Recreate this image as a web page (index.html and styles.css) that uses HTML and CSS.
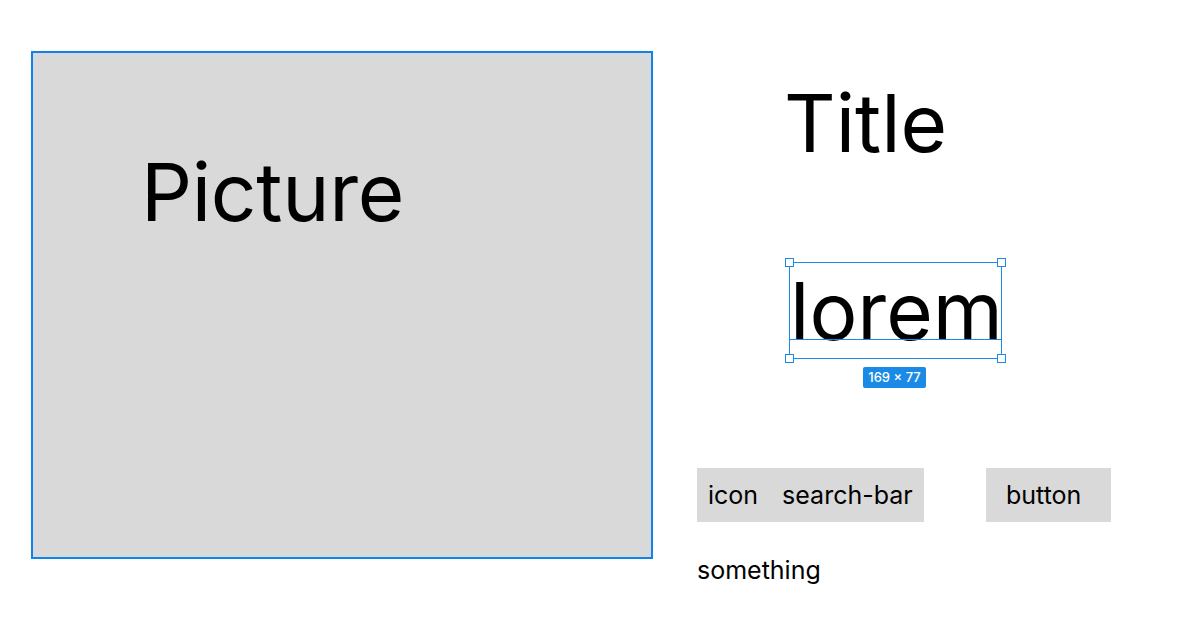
FILE: index.html
```html
<!DOCTYPE html>
<html lang="en">
<head>
<meta charset="utf-8">
<title>Wireframe</title>
<link rel="stylesheet" href="styles.css">
</head>
<body>
<div class="canvas">
  <div class="picture">
    <div class="picture-text">Picture</div>
  </div>
  <div class="side">
    <div class="title">Title</div>
    <div class="selection">
      <span class="lorem">lorem</span>
      <span class="baseline"></span>
      <span class="handle tl"></span>
      <span class="handle tr"></span>
      <span class="handle bl"></span>
      <span class="handle br"></span>
      <span class="size-label">169 × 77</span>
    </div>
    <div class="row">
      <div class="searchbar">
        <span>icon</span>
        <span>search-bar</span>
      </div>
      <div class="button">button</div>
    </div>
    <div class="something">something</div>
  </div>
</div>
</body>
</html>
```

FILE: styles.css
```css
html, body {
  margin: 0;
  padding: 0;
  background: #ffffff;
}

body {
  font-family: Inter, "Noto Sans", sans-serif;
  color: #000000;
}

.canvas {
  display: flex;
  align-items: flex-start;
  padding: 51px 0 0 31px;
  gap: 44px;
}

.picture {
  box-sizing: border-box;
  width: 622px;
  height: 508px;
  border: 2px solid #0d84eb;
  background: #d9d9d9;
  padding: 90px 0 0 108px;
  flex-shrink: 0;
}

.picture-text {
  font-size: 80px;
  line-height: 97px;
  letter-spacing: -0.3px;
}

.side {
  display: flex;
  flex-direction: column;
  align-items: flex-start;
  padding-top: 23px;
}

.title {
  font-size: 80px;
  line-height: 97px;
  margin-left: 87px;
}

.selection {
  position: relative;
  box-sizing: border-box;
  width: 213px;
  height: 97px;
  margin: 91px 0 0 92px;
  border: 1px solid #1a8ae6;
}

.lorem {
  display: block;
  font-size: 80px;
  line-height: 95px;
  white-space: nowrap;
}

.baseline {
  position: absolute;
  left: 0;
  right: 0;
  top: 76px;
  height: 1px;
  background: #1a8ae6;
}

.handle {
  position: absolute;
  width: 7px;
  height: 7px;
  background: #ffffff;
  border: 1px solid #1a8ae6;
}

.handle.tl { left: -5px; top: -5px; }
.handle.tr { right: -5px; top: -5px; }
.handle.bl { left: -5px; bottom: -5px; }
.handle.br { right: -5px; bottom: -5px; }

.size-label {
  position: absolute;
  top: 104px;
  left: 73px;
  width: 63px;
  height: 21px;
  border-radius: 2px;
  background: #1a8ae6;
  color: #ffffff;
  font-size: 13px;
  font-weight: 500;
  line-height: 21px;
  text-align: center;
}

.row {
  display: flex;
  gap: 62px;
  margin-top: 109px;
}

.searchbar {
  box-sizing: border-box;
  width: 227px;
  height: 54px;
  background: #d9d9d9;
  display: flex;
  align-items: center;
  gap: 24px;
  padding-left: 11px;
  font-size: 25px;
}

.button {
  box-sizing: border-box;
  width: 125px;
  height: 54px;
  background: #d9d9d9;
  display: flex;
  align-items: center;
  padding-left: 20px;
  font-size: 25px;
}

.something {
  font-size: 25px;
  line-height: 30px;
  margin-top: 33px;
}
```
